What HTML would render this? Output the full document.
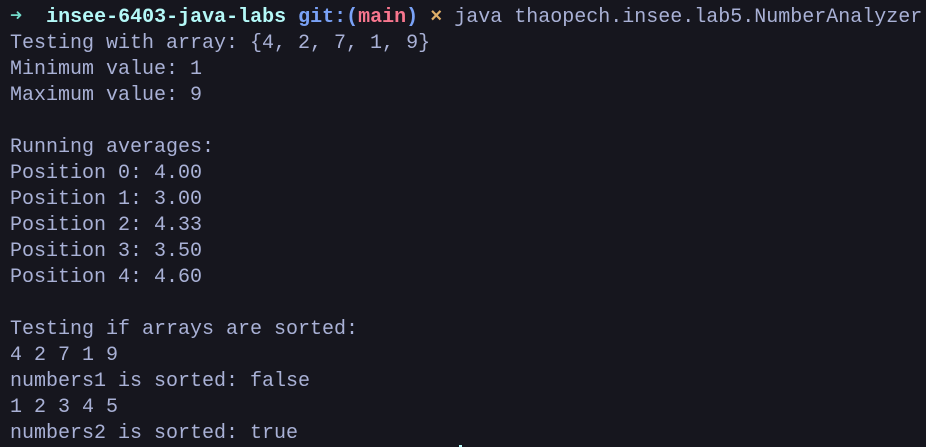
<!DOCTYPE html>
<html><head><style>
html,body{margin:0;padding:0;background:#16161e;width:926px;height:447px;overflow:hidden}
pre{margin:0;padding:5px 0 0 10px;font-family:"Liberation Mono",monospace;font-size:20px;line-height:26px;color:#a9b1d6;white-space:pre}
.g{color:#73daca;font-weight:bold}.c{color:#b4f9f8;font-weight:bold}.b{color:#7aa2f7;font-weight:bold}.r{color:#f7768e;font-weight:bold}.y{color:#e0af68;font-weight:bold}
.cur{position:absolute;left:459px;top:445px;width:3px;height:2px;background:#b4f9f8}
</style></head><body>
<pre><span class="g">➜</span>  <span class="c">insee-6403-java-labs</span> <span class="b">git:(</span><span class="r">main</span><span class="b">)</span> <span class="y">×</span> java thaopech.insee.lab5.NumberAnalyzer
Testing with array: {4, 2, 7, 1, 9}
Minimum value: 1
Maximum value: 9

Running averages:
Position 0: 4.00
Position 1: 3.00
Position 2: 4.33
Position 3: 3.50
Position 4: 4.60

Testing if arrays are sorted:
4 2 7 1 9
numbers1 is sorted: false
1 2 3 4 5
numbers2 is sorted: true</pre>
<div class="cur"></div>
</body></html>
